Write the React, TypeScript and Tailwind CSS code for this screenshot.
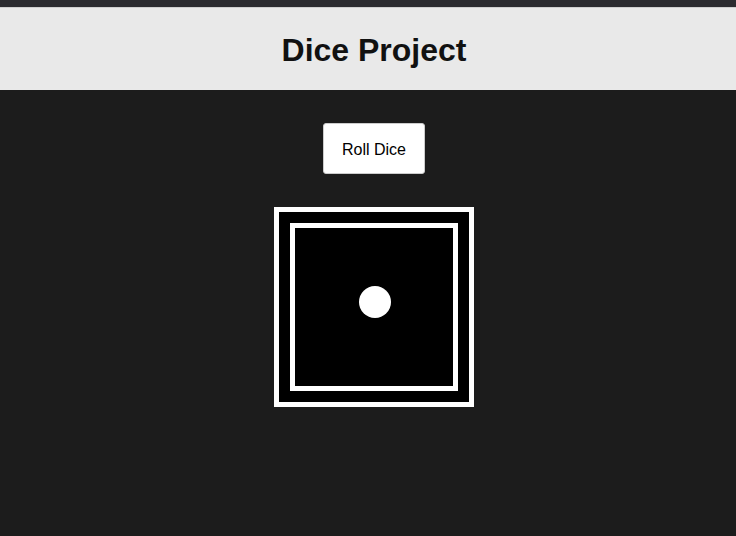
const App = () => {
  return (
    <div className="min-h-[536px] bg-[#1c1c1c] font-['Liberation_Sans',Arial,sans-serif]">
      <div className="h-[7px] bg-[#2b2b2f]" />
      <header className="h-[83px] border-t border-[#cfcfcf] bg-[#e9e9e9] pl-3 flex items-center justify-center">
        <h1 className="text-[32px] font-bold text-[#111] leading-none mt-[2px]">Dice Project</h1>
      </header>
      <main className="pl-3 flex flex-col items-center">
        <button className="mt-[33px] w-[102px] h-[51px] rounded-[3px] bg-white text-base text-black border border-[#ccc] pt-[2px]">
          Roll Dice
        </button>
        <div className="mt-[33px] w-[200px] h-[200px] border-[5px] border-white bg-black p-[11px]">
          <div className="w-full h-full border-[5px] border-white bg-black flex items-center justify-center">
            <div className="w-8 h-8 rounded-full bg-white mb-[10px] ml-[1px]" />
          </div>
        </div>
      </main>
    </div>
  );
};

export default App;
